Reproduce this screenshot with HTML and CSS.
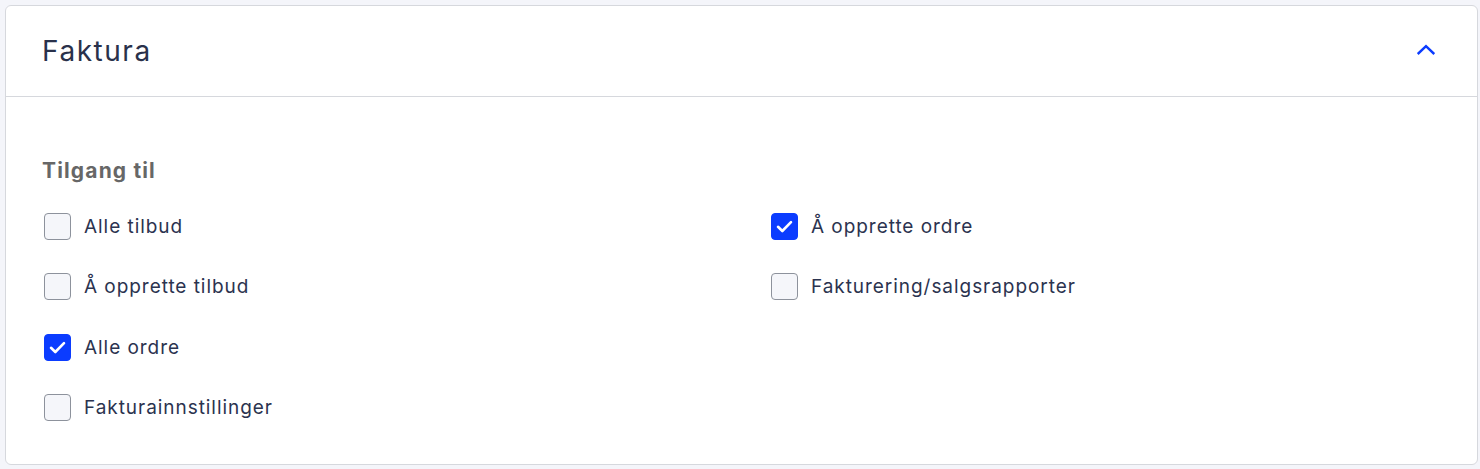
FILE: index.html
```html
<!DOCTYPE html>
<html lang="no">
<head>
<meta charset="utf-8">
<title>Faktura</title>
<link rel="stylesheet" href="styles.css">
</head>
<body>
<section class="card">
  <header class="card-header">
    <h2 class="card-title">Faktura</h2>
    <button class="toggle" aria-label="Skjul">
      <svg width="18" height="11" viewBox="0 0 18 11" fill="none"><path d="M1.6 9.2 L9 2.2 L16.4 9.2" stroke="#0b3cff" stroke-width="2.5" stroke-linecap="square" stroke-linejoin="miter"/></svg>
    </button>
  </header>
  <div class="card-body">
    <h3 class="group-title">Tilgang til</h3>
    <div class="options">
      <label class="opt c1 r1"><span class="box"></span><span class="text">Alle tilbud</span></label>
      <label class="opt c1 r2"><span class="box"></span><span class="text">Å opprette tilbud</span></label>
      <label class="opt c1 r3"><span class="box checked"><svg width="17" height="13" viewBox="0 0 17 13" fill="none"><path d="M2 6.8 L6.3 11 L15 2.2" stroke="#fff" stroke-width="2.6" stroke-linecap="round" stroke-linejoin="round"/></svg></span><span class="text">Alle ordre</span></label>
      <label class="opt c1 r4"><span class="box"></span><span class="text">Fakturainnstillinger</span></label>
      <label class="opt c2 r1"><span class="box checked"><svg width="17" height="13" viewBox="0 0 17 13" fill="none"><path d="M2 6.8 L6.3 11 L15 2.2" stroke="#fff" stroke-width="2.6" stroke-linecap="round" stroke-linejoin="round"/></svg></span><span class="text">Å opprette ordre</span></label>
      <label class="opt c2 r2"><span class="box"></span><span class="text">Fakturering/salgsrapporter</span></label>
    </div>
  </div>
</section>
</body>
</html>
```
FILE: styles.css
```css
* { box-sizing: border-box; }
html, body { margin: 0; }
body {
  background: #f4f5fa;
  padding: 5px 2px 4px 5px;
  font-family: Inter, "Noto Sans", sans-serif;
}
.card {
  background: #fff;
  border: 1px solid #d6d8dd;
  border-radius: 6px;
  height: 460px;
}
.card-header {
  height: 91px;
  border-bottom: 1px solid #d6d8dd;
  display: flex;
  align-items: center;
  justify-content: space-between;
  padding: 0 42px 0 36px;
}
.card-title {
  margin: 0;
  font-size: 28px;
  font-weight: 400;
  color: #29314b;
  letter-spacing: 0.055em;
}
.toggle {
  background: none;
  border: 0;
  padding: 0;
  width: 18px;
  height: 11px;
  display: flex;
  margin-top: -3px;
}
.card-body {
  padding: 62px 36px 43px 36px;
}
.group-title {
  margin: 0 0 30px;
  font-size: 21px;
  line-height: 24px;
  font-weight: 700;
  color: #676767;
  letter-spacing: 0.055em;
}
.options {
  display: grid;
  grid-template-columns: 727px 1fr;
  grid-auto-rows: 27px;
  row-gap: 33.33px;
  padding-left: 2px;
}
.c1 { grid-column: 1; }
.c2 { grid-column: 2; }
.r1 { grid-row: 1; }
.r2 { grid-row: 2; }
.r3 { grid-row: 3; }
.r4 { grid-row: 4; }
.opt {
  display: flex;
  align-items: center;
  gap: 13px;
  font-size: 19px;
  letter-spacing: 0.05em;
  color: #2b334f;
}
.box {
  width: 27px;
  height: 27px;
  border: 1px solid #8d929c;
  border-radius: 4px;
  background: #f5f6fa;
  display: flex;
  align-items: center;
  justify-content: center;
  flex: none;
}
.box.checked {
  background: #0b3cff;
  border-color: #0b3cff;
}
```
